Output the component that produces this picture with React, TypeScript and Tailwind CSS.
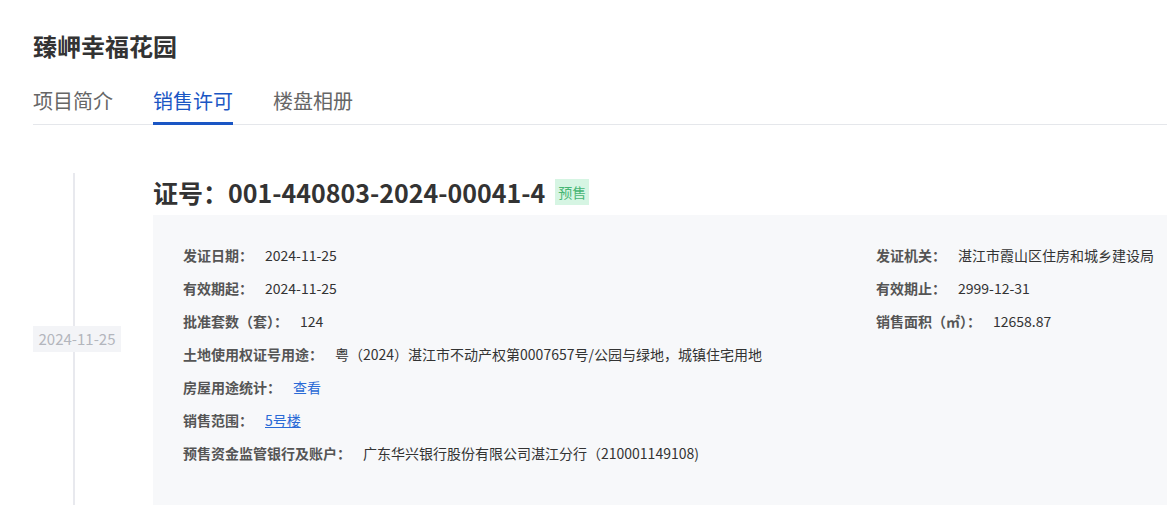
import React from "react";

const font = { fontFamily: '"Noto Sans CJK SC", "Noto Sans", sans-serif' };

function Row({
  label,
  value,
  rightLabel,
  rightValue,
}: {
  label: string;
  value: React.ReactNode;
  rightLabel?: string;
  rightValue?: string;
}) {
  return (
    <div className="flex h-[33px] items-center text-[14px]">
      <div className="flex w-[693px] items-center gap-[12px]">
        <span className="font-semibold text-[#555]">{label}</span>
        <span className="text-[#333]">{value}</span>
      </div>
      {rightLabel && (
        <div className="flex items-center gap-[12px]">
          <span className="font-semibold text-[#555]">{rightLabel}</span>
          <span className="text-[#333]">{rightValue}</span>
        </div>
      )}
    </div>
  );
}

export default function App() {
  return (
    <div className="min-h-[511px] w-full overflow-hidden bg-white pl-[33px]" style={font}>
      <h1 className="pt-[30px] text-[24px] font-bold leading-[32px] text-[#333]">臻岬幸福花园</h1>
      <div className="mt-[25px] flex gap-[40px] border-b border-[#e5e7eb] text-[20px]">
        <div className="pb-[9px] leading-[28px] text-[#666]">项目简介</div>
        <div className="-mb-px border-b-[3px] border-[#1a56c4] pb-[6px] leading-[28px] text-[#1a56c4]">销售许可</div>
        <div className="pb-[9px] leading-[28px] text-[#666]">楼盘相册</div>
      </div>

      <div className="mt-[48px] flex">
        <div className="relative flex w-[120px] shrink-0 items-center">
          <div className="absolute bottom-0 left-[40px] top-0 w-[2px] bg-[#e8e9ee]" />
          <div className="relative h-[26px] w-[88px] bg-[#f3f4f7] text-center text-[15px] leading-[26px] text-[#b3b6bd]">
            2024-11-25
          </div>
        </div>
        <div className="flex-1 pt-[4px]">
          <div className="flex items-center gap-[10px]">
            <div className="text-[25px] font-bold leading-[30px] text-[#333]">证号：001-440803-2024-00041-4</div>
            <div className="h-[26px] bg-[#d6f5e3] px-[3px] text-[14px] leading-[26px] text-[#46b673]">预售</div>
          </div>
          <div className="mt-[8px] bg-[#f7f8fa] pb-[35px] pl-[30px] pt-[24px]">
            <Row label="发证日期：" value="2024-11-25" rightLabel="发证机关：" rightValue="湛江市霞山区住房和城乡建设局" />
            <Row label="有效期起：" value="2024-11-25" rightLabel="有效期止：" rightValue="2999-12-31" />
            <Row label="批准套数（套）：" value="124" rightLabel="销售面积（㎡）：" rightValue="12658.87" />
            <Row label="土地使用权证号用途：" value="粤（2024）湛江市不动产权第0007657号/公园与绿地，城镇住宅用地" />
            <Row label="房屋用途统计：" value={<span className="text-[#2a6ad6]">查看</span>} />
            <Row label="销售范围：" value={<span className="text-[#2a6ad6] underline">5号楼</span>} />
            <Row label="预售资金监管银行及账户：" value="广东华兴银行股份有限公司湛江分行（210001149108)" />
          </div>
        </div>
      </div>
    </div>
  );
}
